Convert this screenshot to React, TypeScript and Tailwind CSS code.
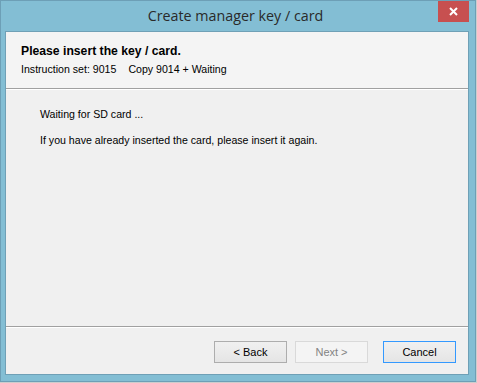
const ui = "font-['Liberation_Sans',Arial,sans-serif]";

function WinButton({
  label,
  disabled,
  primary,
}: {
  label: string;
  disabled?: boolean;
  primary?: boolean;
}) {
  const base =
    "h-[22px] w-[73px] border text-[11px] leading-none flex items-center justify-center " +
    ui;
  if (disabled) {
    return (
      <div className={base + " border-[#d9d9d9] bg-[#f4f4f4] text-[#838383]"}>
        {label}
      </div>
    );
  }
  return (
    <div
      className={
        base +
        " bg-gradient-to-b from-[#f0f0f0] to-[#e5e5e5] text-black " +
        (primary ? "border-[#3399ff]" : "border-[#adadad]")
      }
    >
      {label}
    </div>
  );
}

export default function App() {
  return (
    <div className="w-[477px] h-[383px] bg-[#cdcdcd] overflow-hidden">
      <div className="relative w-[476px] h-[382px] border border-[#6d9fb6] bg-[#83bed4] flex flex-col">
        {/* Title bar */}
        <div className="h-[30px] flex items-center justify-center pr-[5px]">
          <span className="font-['Open_Sans',sans-serif] text-[14.3px] text-[#2a2a2a] pb-px">
            Create manager key / card
          </span>
        </div>
        <div className="absolute top-0 right-[6px] h-[21px] w-[31px] bg-[#c75050] flex items-center justify-center">
          <svg width="9" height="9" viewBox="0 0 9 9">
            <path d="M1 1L8 8M8 1L1 8" stroke="white" strokeWidth="2" />
          </svg>
        </div>

        {/* Client panel */}
        <div className="ml-[4px] mr-[6px] h-[344px] border border-[#6fa0b6] bg-[#f0f0f0] flex flex-col">
          <div className={"h-[56px] bg-[#f4f4f4] pl-[15px] pt-[12px] text-black " + ui}>
            <div className="text-[12.2px] font-bold leading-[14px]">
              Please insert the key / card.
            </div>
            <div className="mt-[5px] text-[10.6px] leading-[13px] flex gap-[12px]">
              <span>Instruction set: 9015</span>
              <span>Copy 9014 + Waiting</span>
            </div>
          </div>
          <div className="h-px bg-[#a0a0a0]" />
          <div className="h-px bg-white" />

          <div className={"flex-1 pl-[34px] pt-[18px] text-[10.6px] leading-[13px] text-black " + ui}>
            <div>Waiting for SD card ...</div>
            <div className="mt-[13px]">
              If you have already inserted the card, please insert it again.
            </div>
          </div>

          <div className="h-px bg-[#a0a0a0]" />
          <div className="h-px bg-white" />
          <div className="h-[46px] flex items-start justify-end pt-[13px] pr-[12px]">
            <WinButton label="< Back" />
            <div className="w-[8px]" />
            <WinButton label="Next >" disabled />
            <div className="w-[15px]" />
            <WinButton label="Cancel" primary />
          </div>
        </div>
      </div>
    </div>
  );
}
